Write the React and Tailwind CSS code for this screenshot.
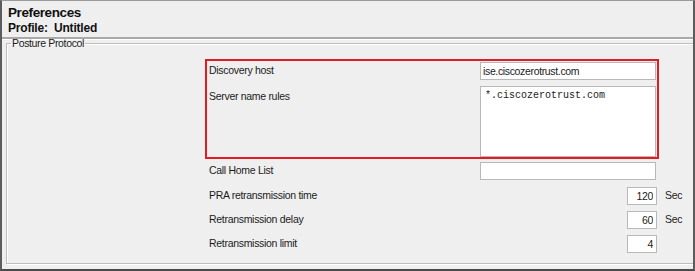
export default function App() {
  const font = { fontFamily: '"Liberation Sans", Arial, sans-serif' };
  const label = "text-[10.5px] tracking-[-0.3px] text-[#1b1b1b]";
  const input =
    "h-[18px] bg-white border border-[#b8b8b8] text-[10.5px] tracking-[-0.35px] text-[#1b1b1b] outline-none";

  return (
    <div
      className="w-[695px] h-[271px] overflow-hidden bg-[#efefef] border-t border-t-[#9a9a9a] border-x-2 border-x-[#5c5c5c] border-b-2 border-b-[#4a4a4a] flex flex-col"
      style={font}
    >
      <div className="pl-[6px] pt-[3px] h-[38px] border-b-2 border-b-[#a9a9a9] shadow-[0_1px_0_#ffffff]">
        <div className="text-[13.5px] font-bold tracking-[-0.4px] leading-[17px] text-[#111]">
          Preferences
        </div>
        <div className="text-[12px] font-bold tracking-[-0.2px] leading-[14px] text-[#111] whitespace-pre">
          Profile:  Untitled
        </div>
      </div>

      <fieldset className="ml-[4px] mr-[-12px] mt-[-2px] mb-[5px] flex-1 border border-[#bdbdbd] shadow-[inset_1px_1px_0_#ffffff,1px_1px_0_#ffffff] p-0 min-w-0">
        <legend className="ml-[4px] px-[1px] text-[10.5px] tracking-[-0.35px] leading-[12px] text-[#1b1b1b]">
          Posture Protocol
        </legend>

        <div className="pl-[198px]">
          <div className="mt-[10px] w-[454px] h-[100px] border-2 border-[#e31b23] pt-[1px] pl-[2px] pr-[1px] flex flex-col gap-[6px]">
            <div className="flex items-center h-[18px]">
              <span className={`${label} w-[271px]`}>Discovery host</span>
              <input
                className={`${input} w-[176px] px-[2px]`}
                defaultValue="ise.ciscozerotrust.com"
              />
            </div>
            <div className="flex">
              <span className={`${label} w-[271px] pt-[3px]`}>Server name rules</span>
              <textarea
                className="w-[176px] h-[71px] bg-white border border-[#b8b8b8] resize-none outline-none px-[4px] pt-[3px] text-[10px] leading-[12px] text-[#1b1b1b]"
                style={{ fontFamily: '"Liberation Mono", "Courier New", monospace' }}
                defaultValue="*.ciscozerotrust.com"
              />
            </div>
          </div>

          <div className="pl-[4px] pt-[3px] flex flex-col gap-[6px]">
            <div className="flex items-center h-[18px]">
              <span className={`${label} w-[271px]`}>Call Home List</span>
              <input className={`${input} w-[176px] px-[2px]`} defaultValue="" />
            </div>
            <div className="flex items-center h-[18px] mt-[1px]">
              <span className={`${label} w-[418px]`}>PRA retransmission time</span>
              <input className={`${input} w-[30px] px-[3px] text-right`} defaultValue="120" />
              <span className={`${label} ml-[8px]`}>Sec</span>
            </div>
            <div className="flex items-center h-[18px]">
              <span className={`${label} w-[418px]`}>Retransmission delay</span>
              <input className={`${input} w-[30px] px-[3px] text-right`} defaultValue="60" />
              <span className={`${label} ml-[8px]`}>Sec</span>
            </div>
            <div className="flex items-center h-[18px]">
              <span className={`${label} w-[418px]`}>Retransmission limit</span>
              <input className={`${input} w-[30px] px-[3px] text-right`} defaultValue="4" />
            </div>
          </div>
        </div>
      </fieldset>
    </div>
  );
}
